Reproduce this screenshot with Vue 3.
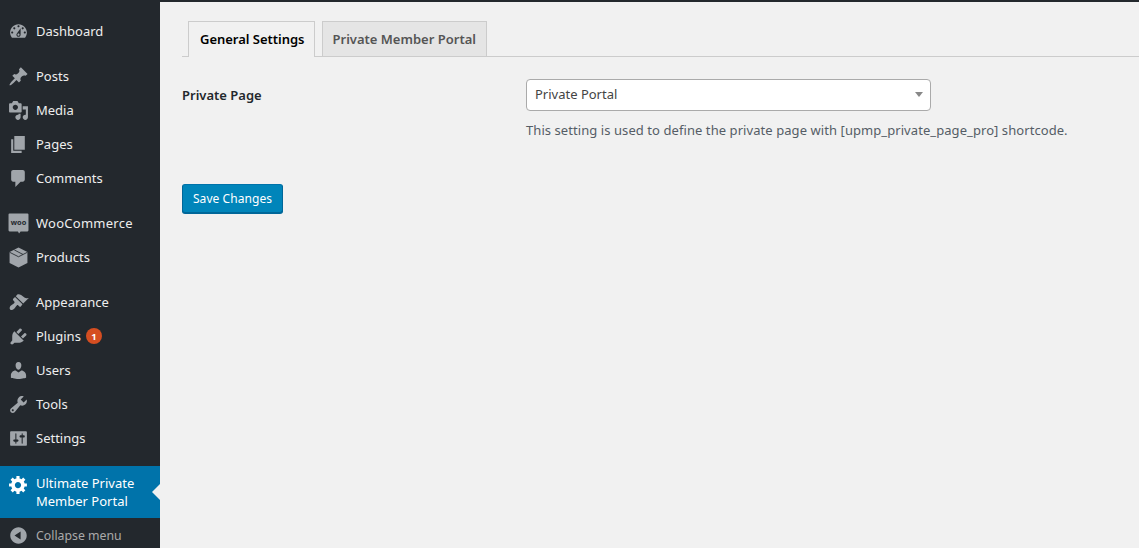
<script setup>
const groups = [
  [{ name: 'Dashboard', vb: 20, d: 'M3.76 16h12.48c1.1-1.37 1.76-3.11 1.76-5 0-4.42-3.58-8-8-8s-8 3.58-8 8c0 1.89.66 3.63 1.76 5zM10 4c.55 0 1 .45 1 1s-.45 1-1 1-1-.45-1-1 .45-1 1-1zM6 6c.55 0 1 .45 1 1s-.45 1-1 1-1-.45-1-1 .45-1 1-1zm8 0c.55 0 1 .45 1 1s-.45 1-1 1-1-.45-1-1 .45-1 1-1zm-5.37 5.55L12 7v6c0 1.1-.9 2-2 2s-2-.9-2-2c0-.57.24-1.08.63-1.45zM4 10c.55 0 1 .45 1 1s-.45 1-1 1-1-.45-1-1 .45-1 1-1zm12 0c.55 0 1 .45 1 1s-.45 1-1 1-1-.45-1-1 .45-1 1-1zm-5 3c0-.55-.45-1-1-1s-1 .45-1 1 .45 1 1 1 1-.45 1-1z' }],
  [
    { name: 'Posts', d: 'M10.44 3.02l1.82-1.82 6.36 6.35-1.83 1.82c-1.05-.68-2.48-.57-3.41.36l-.75.75c-.92.93-1.04 2.35-.35 3.41l-1.83 1.82-2.41-2.41-2.8 2.79c-.42.42-3.38 2.71-3.8 2.29s1.86-3.39 2.28-3.81l2.79-2.79L4.1 9.36l1.83-1.82c1.05.69 2.48.57 3.4-.36l.75-.75c.93-.92 1.05-2.35.36-3.41z' },
    { name: 'Media', d: 'M13 11V4c0-.55-.45-1-1-1h-1.67L9 1H5L3.67 3H2c-.55 0-1 .45-1 1v7c0 .55.45 1 1 1h10c.55 0 1-.45 1-1zM7 4.500c1.38 0 2.5 1.12 2.5 2.5S8.38 9.5 7 9.5 4.5 8.38 4.5 7 5.62 4.5 7 4.5zM14 6h5v10.5c0 1.38-1.12 2.5-2.5 2.5S14 17.88 14 16.5s1.12-2.5 2.5-2.5c.17 0 .34.02.5.05V9h-3V6zm-4 8.05V13h2v3.5c0 1.38-1.12 2.5-2.5 2.5S7 17.88 7 16.5 8.12 14 9.5 14c.17 0 .34.02.5.05z' },
    { name: 'Pages', d: 'M6 15V2h10v13H6zm-1 1h8v2H3V5h2v11z' },
    { name: 'Comments', d: 'M5 2h9c1.1 0 2 .9 2 2v7c0 1.1-.9 2-2 2h-2l-5 5v-5H5c-1.1 0-2-.9-2-2V4c0-1.1.9-2 2-2z' }
  ],
  [
    { name: 'WooCommerce', woo: true },
    { name: 'Products', box: true, d: 'M10 .5l8.500 4.300v10.400L10 19.500l-8.500-4.300V4.800z' }
  ],
  [
    { name: 'Appearance', d: 'M14.48 11.06L7.41 3.99l1.5-1.5c.5-.56 2.3-.47 3.51.32 1.21.8 1.43 1.28 2.91 2.1 1.18.64 2.45 1.26 4.45.85zm-.71.71L6.7 4.7 4.93 6.47c-.39.39-.39 1.02 0 1.41l1.06 1.06c.39.39.39 1.03 0 1.42-.6.6-1.43 1.11-2.21 1.69-.35.26-.7.53-1.01.84-1.34 1.34-1.58 2.9-.7 3.8.9.88 2.46.64 3.8-.7.31-.31.58-.66.84-1.01.58-.78 1.09-1.61 1.69-2.21.39-.39 1.03-.39 1.42 0l1.06 1.06c.39.39 1.02.39 1.41 0z' },
    { name: 'Plugins', badge: '1', d: 'M13.11 4.36L9.87 7.6 8 5.73l3.24-3.24c.35-.34 1.05-.2 1.56.32.52.51.66 1.21.31 1.55zm-8 1.77l.91-1.12 9.01 9.01-1.19.84c-.71.71-2.63 1.16-3.82 1.16H6.14L4.9 17.26c-.59.59-1.54.59-2.12 0-.59-.58-.59-1.53 0-2.12l1.24-1.24v-3.88c0-1.13.4-3.19 1.09-3.89zm7.26 3.97l3.24-3.24c.34-.35 1.04-.21 1.55.31.52.51.66 1.21.31 1.55l-3.24 3.25z' },
    { name: 'Users', d: 'M10 9.25c-2.27 0-2.73-3.44-2.73-3.44C7 4.02 7.82 2 9.97 2c2.16 0 2.98 2.02 2.71 3.81 0 0-.41 3.44-2.68 3.44zm0 2.57L12.72 10c2.39 0 4.52 2.33 4.52 4.53v2.49s-3.65 1.13-7.24 1.13c-3.65 0-7.24-1.13-7.24-1.13v-2.49c0-2.25 1.94-4.48 4.47-4.48z' },
    { name: 'Tools', d: 'M16.68 9.77c-1.34 1.34-3.3 1.67-4.95.99l-5.41 6.52c-.99.99-2.59.99-3.58 0s-.99-2.59 0-3.57l6.52-5.42c-.68-1.65-.35-3.61.99-4.95 1.28-1.28 3.12-1.62 4.72-1.06l-2.89 2.89 2.82 2.82 2.86-2.87c.53 1.58.18 3.39-1.08 4.65zM3.81 16.21c.4.39 1.04.39 1.43 0 .4-.4.4-1.04 0-1.43-.39-.4-1.03-.4-1.43 0-.39.39-.39 1.03 0 1.43z' },
    { name: 'Settings', d: 'M18 16V4c0-.55-.45-1-1-1H3c-.55 0-1 .45-1 1v12c0 .55.45 1 1 1h14c.55 0 1-.45 1-1zM8 11h1c.55 0 1 .45 1 1s-.45 1-1 1H8v1.5c0 .28-.22.5-.5.5s-.5-.22-.5-.5V13H6c-.55 0-1-.45-1-1s.45-1 1-1h1V5.5c0-.28.22-.5.5-.5s.5.22.5.5V11zm5-2h-1c-.55 0-1-.45-1-1s.45-1 1-1h1V5.5c0-.28.22-.5.5-.5s.5.22.5.5V7h1c.55 0 1 .45 1 1s-.45 1-1 1h-1v5.5c0 .28-.22.5-.5.5s-.5-.22-.5-.5V9z' }
  ]
]
const gear = 'M18 12h-2.18c-.17.7-.44 1.35-.81 1.93l1.54 1.54-2.1 2.1-1.54-1.54c-.58.36-1.23.63-1.91.79V19H8v-2.18c-.68-.16-1.33-.43-1.91-.79l-1.54 1.54-2.12-2.12 1.54-1.54c-.36-.58-.63-1.23-.79-1.91H1V9.03h2.17c.16-.7.44-1.35.8-1.94L2.43 5.55l2.1-2.1 1.54 1.54c.58-.37 1.24-.64 1.93-.81V2h3v2.18c.68.16 1.33.43 1.91.79l1.54-1.54 2.12 2.12-1.54 1.54c.36.59.64 1.24.8 1.94H18V12zm-8.5 1.5c1.66 0 3-1.34 3-3s-1.34-3-3-3-3 1.34-3 3 1.34 3 3 3z'
const collapse = 'M10 2.16c4.33 0 7.84 3.51 7.84 7.84s-3.51 7.84-7.84 7.84S2.16 14.33 2.16 10 5.71 2.16 10 2.16zm2 11.72V6.12L6.18 9.97z'
</script>

<template>
  <div class="page">
    <aside class="side">
      <div v-for="(g, i) in groups" :key="i" class="group">
        <a v-for="it in g" :key="it.name" class="item" :class="{ wide: it.name === 'WooCommerce' }">
          <svg v-if="it.woo" class="ico" viewBox="0 0 20 20">
            <path d="M1.500.500h17a1 1 0 0 1 1 1v15a1 1 0 0 1-1 1H12l-1.500 2-1-2H1.500a1 1 0 0 1-1-1v-15a1 1 0 0 1 1-1z" fill="#a0a5aa" />
            <text x="10" y="11.500" class="woo" text-anchor="middle">woo</text>
          </svg>
          <svg v-else class="ico" viewBox="0 0 20 20">
            <path :d="it.d" fill="#a0a5aa" />
            <path v-if="it.box" d="M1.500 5l8.500 4.300L18.500 5M6 2.800l8.300 4.300" fill="none" stroke="#23282d" stroke-width=".8" />
          </svg>
          <span>{{ it.name }}</span>
          <b v-if="it.badge" class="badge">{{ it.badge }}</b>
        </a>
      </div>
      <a class="item current">
        <svg class="ico" viewBox="0 0 20 20"><path :d="gear" fill="#fff" /></svg>
        <span>Ultimate Private<br />Member Portal</span>
      </a>
      <a class="item collapse">
        <svg class="ico" viewBox="0 0 20 20"><path :d="collapse" fill="#a0a5aa" /></svg>
        <span>Collapse menu</span>
      </a>
    </aside>

    <main class="main">
      <nav class="tabs">
        <a class="tab active">General Settings</a>
        <a class="tab">Private Member Portal</a>
      </nav>
      <div class="row">
        <label class="lbl">Private Page</label>
        <div class="field">
          <div class="select"><span>Private Portal</span><i class="caret"></i></div>
          <p class="hint">This setting is used to define the private page with [upmp_private_page_pro] shortcode.</p>
        </div>
      </div>
      <button class="btn">Save Changes</button>
    </main>
  </div>
</template>

<style>
html, body { margin: 0; background: #f1f1f1; }
</style>

<style scoped>
.page {
  display: flex;
  height: 548px;
  overflow: hidden;
  font-family: "Noto Sans", "Open Sans", sans-serif;
  font-size: 13px;
  color: #32373c;
  background: #f1f1f1;
}
.side {
  width: 160px;
  flex: none;
  background: #23282d;
  padding-top: 14px;
  box-sizing: border-box;
}
.group { margin-bottom: 11px; }
.item {
  display: flex;
  align-items: center;
  height: 34px;
  color: #eee;
  position: relative;
}
.wide { letter-spacing: .25px; }
.ico { width: 21px; height: 21px; margin: 0 7px 0 8px; flex: none; }
.woo { font: 700 7px "Noto Sans", sans-serif; fill: #23282d; letter-spacing: 0; }
.badge {
  width: 16px; height: 16px; margin-left: 5px; border-radius: 50%;
  background: #d54e21; color: #fff; font-size: 9.500px; font-weight: 700;
  display: flex; align-items: center; justify-content: center;
}
.current {
  height: 52px;
  background: #0073aa;
  color: #fff;
  line-height: 18px;
  align-items: flex-start;
  padding-top: 8px;
  box-sizing: border-box;
}
.current::after {
  content: "";
  position: absolute;
  right: 0;
  top: 18px;
  border: 8px solid transparent;
  border-right-color: #f1f1f1;
  border-left-width: 0;
}
.collapse { color: #aaa; font-size: 12.300px; }
.main {
  flex: 1;
  border-top: 2px solid #23282d;
  padding: 19px 0 0 22px;
  min-width: 0;
}
.tabs {
  display: flex;
  gap: 7px;
  height: 35px;
  padding-left: 6px;
  border-bottom: 1px solid #ccc;
}
.tab {
  height: 34px;
  line-height: 34px;
  padding: 0 10px;
  border: 1px solid #ccc;
  border-bottom: 0;
  background: #e5e5e5;
  color: #555;
  font-weight: 600;
}
.tab.active {
  height: 35px;
  padding: 0 9px 0 11px;
  letter-spacing: -.02px;
  background: #f1f1f1;
  color: #000;
}
.row { display: flex; margin-top: 22px; }
.lbl {
  width: 344px;
  flex: none;
  font-weight: 600;
  color: #23282d;
  line-height: 32px;
}
.select {
  width: 405px;
  height: 32px;
  box-sizing: border-box;
  border: 1px solid #aaa;
  border-radius: 4px;
  background: #fff;
  display: flex;
  align-items: center;
  justify-content: space-between;
  padding: 0 7px 2px 8px;
  color: #444;
}
.caret {
  border: 5px solid transparent;
  border-top-color: #888;
  border-bottom-width: 0;
  border-left-width: 4px;
  border-right-width: 4px;
}
.hint { margin: 10px 0 0; line-height: 18px; color: #555d66; letter-spacing: .07px; }
.btn {
  display: block;
  margin-top: 45px;
  width: 101px;
  height: 29px;
  padding: 0;
  border: 1px solid #0073aa;
  border-color: #0073aa #006799 #006799;
  border-radius: 3px;
  background: #0085ba;
  box-shadow: 0 1px 0 #006799;
  color: #fff;
  font: 12px "Noto Sans", sans-serif;
  letter-spacing: .06px;
}
</style>
